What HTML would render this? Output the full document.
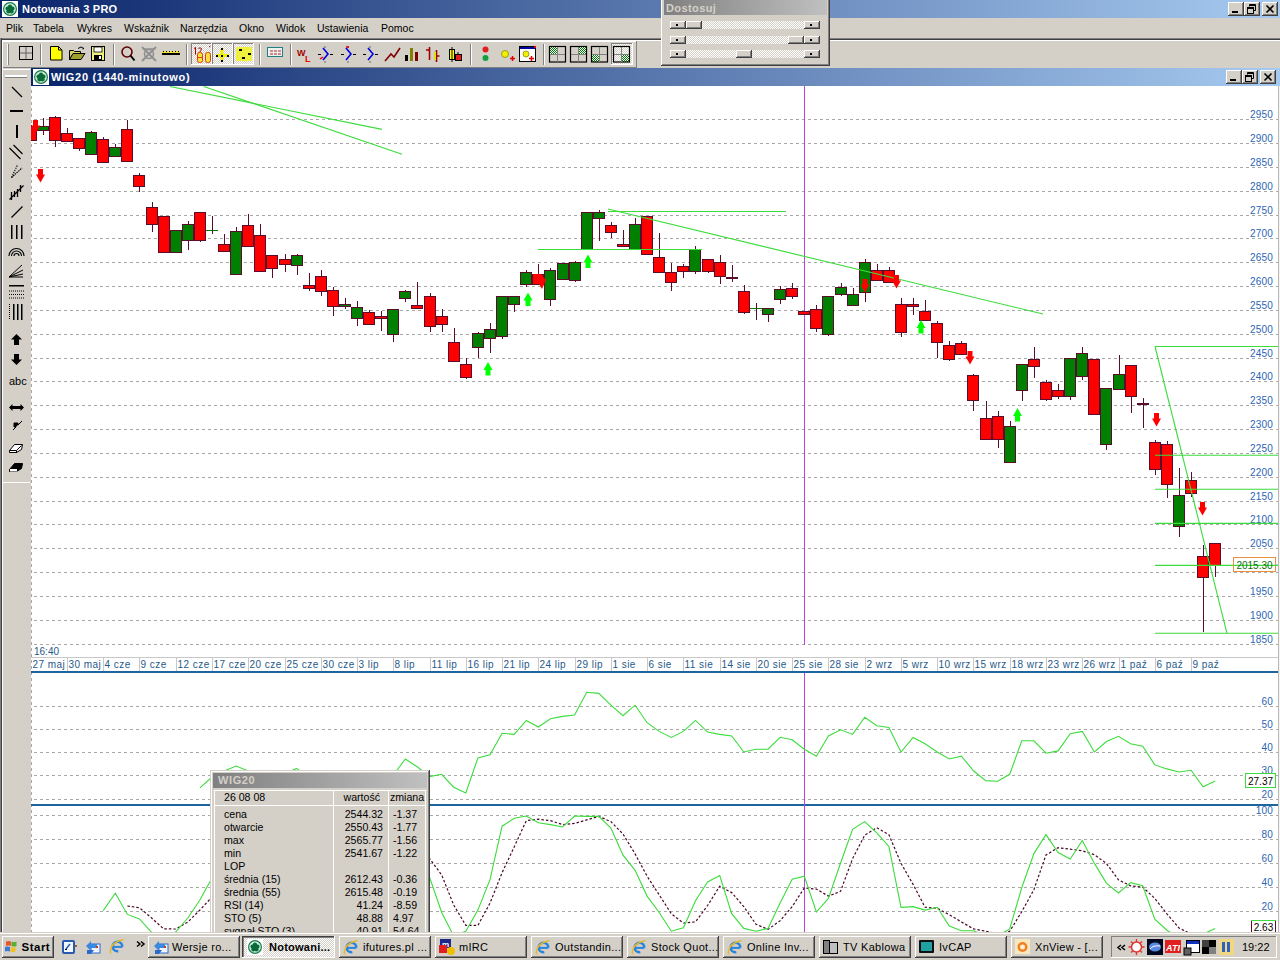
<!DOCTYPE html>
<html><head><meta charset="utf-8"><title>Notowania 3 PRO</title>
<style>html,body{margin:0;padding:0;width:1280px;height:960px;overflow:hidden;background:#d4d0c8}</style>
</head><body>
<svg width="1280" height="960" viewBox="0 0 1280 960" style="position:absolute;left:0;top:0" font-family='"Liberation Sans", sans-serif'>
<defs>
<linearGradient id="tg" x1="0" x2="1" y1="0" y2="0"><stop offset="0" stop-color="#0a246a"/><stop offset="1" stop-color="#a6caf0"/></linearGradient>
<linearGradient id="ig" x1="0" x2="1" y1="0" y2="0"><stop offset="0" stop-color="#808080"/><stop offset="1" stop-color="#c0c0c0"/></linearGradient>
<pattern id="dith" width="2" height="2" patternUnits="userSpaceOnUse"><rect width="2" height="2" fill="#d4d0c8"/><rect width="1" height="1" fill="#ffffff"/><rect x="1" y="1" width="1" height="1" fill="#ffffff"/></pattern>
<pattern id="gdith" width="2" height="2" patternUnits="userSpaceOnUse"><rect width="2" height="2" fill="#ffffff"/><rect width="1" height="1" fill="#008000"/><rect x="1" y="1" width="1" height="1" fill="#008000"/></pattern>
<pattern id="gdith2" width="2" height="2" patternUnits="userSpaceOnUse"><rect width="2" height="2" fill="#c0c0c0"/><rect width="1" height="1" fill="#008000"/><rect x="1" y="1" width="1" height="1" fill="#008000"/></pattern>
<clipPath id="chartclip"><rect x="31" y="86" width="1247" height="560"/></clipPath>
<clipPath id="rsiclip"><rect x="31" y="674" width="1247" height="130"/></clipPath>
<clipPath id="stoclip"><rect x="31" y="806" width="1247" height="126"/></clipPath>
</defs>
<rect x="0" y="0" width="1280" height="960" fill="#d4d0c8" />
<rect x="0" y="0" width="1280" height="18" fill="url(#tg)" />
<rect x="2" y="1" width="16" height="16" fill="#ffffff" />
<circle cx="10" cy="9" r="7" fill="#1a7a4a"/>
<circle cx="10" cy="9" r="5.8" fill="#c8f0d8"/>
<circle cx="10" cy="9.3" r="3.4" fill="#0a6a3a"/>
<circle cx="10.00" cy="6.70" r="2.1" fill="#0a6a3a"/>
<circle cx="12.47" cy="8.50" r="2.1" fill="#0a6a3a"/>
<circle cx="11.53" cy="11.40" r="2.1" fill="#0a6a3a"/>
<circle cx="8.47" cy="11.40" r="2.1" fill="#0a6a3a"/>
<circle cx="7.53" cy="8.50" r="2.1" fill="#0a6a3a"/>
<text x="22" y="13" font-size="11" fill="#ffffff" font-weight="bold" text-anchor="start" letter-spacing="0.25" >Notowania 3 PRO</text>
<rect x="1228" y="2" width="16" height="14" fill="#d4d0c8" />
<rect x="1228" y="2" width="16" height="1" fill="#ffffff"/>
<rect x="1228" y="2" width="1" height="14" fill="#ffffff"/>
<rect x="1228" y="15" width="16" height="1" fill="#404040"/>
<rect x="1243" y="2" width="1" height="14" fill="#404040"/>
<rect x="1229" y="14" width="14" height="1" fill="#808080"/>
<rect x="1242" y="3" width="1" height="12" fill="#808080"/>
<rect x="1232" y="11" width="6" height="2" fill="#000" />
<rect x="1244" y="2" width="16" height="14" fill="#d4d0c8" />
<rect x="1244" y="2" width="16" height="1" fill="#ffffff"/>
<rect x="1244" y="2" width="1" height="14" fill="#ffffff"/>
<rect x="1244" y="15" width="16" height="1" fill="#404040"/>
<rect x="1259" y="2" width="1" height="14" fill="#404040"/>
<rect x="1245" y="14" width="14" height="1" fill="#808080"/>
<rect x="1258" y="3" width="1" height="12" fill="#808080"/>
<path d="M1249.5 4.5h6v6h-2 M1249.5 4.5v2" stroke="#000" fill="none" stroke-width="1"/>
<rect x="1249" y="5" width="7" height="1" fill="#000" />
<rect x="1247.5" y="7.5" width="6" height="6" fill="none" stroke="#000"/>
<rect x="1247" y="8" width="7" height="1" fill="#000" />
<rect x="1262" y="2" width="16" height="14" fill="#d4d0c8" />
<rect x="1262" y="2" width="16" height="1" fill="#ffffff"/>
<rect x="1262" y="2" width="1" height="14" fill="#ffffff"/>
<rect x="1262" y="15" width="16" height="1" fill="#404040"/>
<rect x="1277" y="2" width="1" height="14" fill="#404040"/>
<rect x="1263" y="14" width="14" height="1" fill="#808080"/>
<rect x="1276" y="3" width="1" height="12" fill="#808080"/>
<path d="M1266.5 5.5L1273.5 12.5M1273.5 5.5L1266.5 12.5" stroke="#000" stroke-width="1.6"/>
<rect x="0" y="18" width="1280" height="20" fill="#d4d0c8" />
<text x="6" y="32" font-size="10.5" fill="#000" font-weight="normal" text-anchor="start" >Plik</text>
<text x="33" y="32" font-size="10.5" fill="#000" font-weight="normal" text-anchor="start" >Tabela</text>
<text x="77" y="32" font-size="10.5" fill="#000" font-weight="normal" text-anchor="start" >Wykres</text>
<text x="124" y="32" font-size="10.5" fill="#000" font-weight="normal" text-anchor="start" >Wskaźnik</text>
<text x="180" y="32" font-size="10.5" fill="#000" font-weight="normal" text-anchor="start" >Narzędzia</text>
<text x="239" y="32" font-size="10.5" fill="#000" font-weight="normal" text-anchor="start" >Okno</text>
<text x="276" y="32" font-size="10.5" fill="#000" font-weight="normal" text-anchor="start" >Widok</text>
<text x="317" y="32" font-size="10.5" fill="#000" font-weight="normal" text-anchor="start" >Ustawienia</text>
<text x="381" y="32" font-size="10.5" fill="#000" font-weight="normal" text-anchor="start" >Pomoc</text>
<rect x="0" y="38" width="1280" height="1" fill="#808080"/>
<rect x="0" y="39" width="1280" height="1" fill="#404040"/>
<rect x="0" y="40" width="1280" height="1" fill="#ffffff"/>
<rect x="0" y="41" width="1280" height="27" fill="#d4d0c8" />
<rect x="2" y="41" width="635" height="1" fill="#ffffff"/>
<rect x="636" y="41" width="1" height="27" fill="#808080"/>
<rect x="0" y="67" width="637" height="1" fill="#808080"/>
<rect x="7" y="44" width="1" height="21" fill="#ffffff"/>
<rect x="8" y="44" width="1" height="21" fill="#808080"/>
<rect x="40" y="44" width="1" height="21" fill="#808080"/>
<rect x="41" y="44" width="1" height="21" fill="#ffffff"/>
<rect x="113" y="44" width="1" height="21" fill="#808080"/>
<rect x="114" y="44" width="1" height="21" fill="#ffffff"/>
<rect x="186" y="44" width="1" height="21" fill="#808080"/>
<rect x="187" y="44" width="1" height="21" fill="#ffffff"/>
<rect x="259" y="44" width="1" height="21" fill="#808080"/>
<rect x="260" y="44" width="1" height="21" fill="#ffffff"/>
<rect x="290" y="44" width="1" height="21" fill="#808080"/>
<rect x="291" y="44" width="1" height="21" fill="#ffffff"/>
<rect x="470" y="44" width="1" height="21" fill="#808080"/>
<rect x="471" y="44" width="1" height="21" fill="#ffffff"/>
<rect x="543" y="44" width="1" height="21" fill="#808080"/>
<rect x="544" y="44" width="1" height="21" fill="#ffffff"/>
<rect x="19.5" y="46.5" width="13" height="13" fill="none" stroke="#000"/>
<path d="M26 47v12M20 53h12" stroke="#606060"/>
<path d="M50.5 46.5h8l3.5 3.5v10h-11.5z" fill="#ffff00" stroke="#000"/>
<path d="M58.5 46.5v3.5h3.5" fill="none" stroke="#000"/>
<path d="M69.5 50.5h4l1 1h6v3h-8l-3 5.5z" fill="#d8d060" stroke="#000"/>
<path d="M69.5 59.5l3.5-6h12l-4 6z" fill="#a0a030" stroke="#000"/>
<path d="M78 48.5q3-3 6 0l-1.5 0.5" fill="none" stroke="#000"/>
<rect x="91.5" y="46.5" width="13" height="14" fill="#f0f080" stroke="#000"/>
<rect x="94" y="47" width="8" height="5" fill="#ffffff" stroke="#000" stroke-width="0.8"/>
<rect x="94" y="55" width="8" height="5" fill="#000"/><rect x="99" y="56" width="2" height="3" fill="#ffffff"/>
<circle cx="127" cy="52" r="5" fill="none" stroke="#600000" stroke-width="1.6"/>
<path d="M130.5 55.5l4 5" stroke="#000" stroke-width="2"/>
<path d="M142 47l14 14M156 47l-14 14" stroke="#909090" stroke-width="2"/>
<circle cx="149" cy="54" r="4.5" fill="none" stroke="#909090" stroke-width="1.6"/>
<path d="M143 49h12" stroke="#909090" stroke-width="1.5"/>
<rect x="162" y="53" width="18" height="2" fill="#000"/>
<rect x="162" y="51" width="18" height="2" fill="#f0e040"/>
<rect x="163" y="51" width="1" height="1" fill="#000"/>
<rect x="166" y="51" width="1" height="1" fill="#000"/>
<rect x="169" y="51" width="1" height="1" fill="#000"/>
<rect x="172" y="51" width="1" height="1" fill="#000"/>
<rect x="175" y="51" width="1" height="1" fill="#000"/>
<rect x="178" y="51" width="1" height="1" fill="#000"/>
<rect x="191" y="43" width="21" height="22" fill="url(#dith)" />
<rect x="191" y="43" width="21" height="1" fill="#808080"/>
<rect x="191" y="43" width="1" height="22" fill="#808080"/>
<rect x="191" y="64" width="21" height="1" fill="#ffffff"/>
<rect x="211" y="43" width="1" height="22" fill="#ffffff"/>
<rect x="212" y="43" width="21" height="22" fill="url(#dith)" />
<rect x="212" y="43" width="21" height="1" fill="#808080"/>
<rect x="212" y="43" width="1" height="22" fill="#808080"/>
<rect x="212" y="64" width="21" height="1" fill="#ffffff"/>
<rect x="232" y="43" width="1" height="22" fill="#ffffff"/>
<rect x="233" y="43" width="21" height="22" fill="url(#dith)" />
<rect x="233" y="43" width="21" height="1" fill="#808080"/>
<rect x="233" y="43" width="1" height="22" fill="#808080"/>
<rect x="233" y="64" width="21" height="1" fill="#ffffff"/>
<rect x="253" y="43" width="1" height="22" fill="#ffffff"/>
<path d="M195.5 47.5v7M194 48.5l1.5-1" stroke="#a00000" fill="none"/>
<path d="M198.5 48.5q1.5-1.5 3 0q0 2-3 5h3" stroke="#a00000" fill="none"/>
<path d="M209 47l1.5-1" stroke="#a00000" fill="none"/>
<rect x="197.5" y="52.5" width="5" height="10" rx="2" fill="#f8e040" stroke="#e04000"/>
<path d="M198 57.5h4" stroke="#e04000"/>
<rect x="205.5" y="52.5" width="5" height="10" rx="2" fill="#f8e040" stroke="#e04000"/>
<path d="M222 48.5v12M216.5 55.5h12" stroke="#f0f000" stroke-width="3"/>
<rect x="221" y="48" width="2" height="2" fill="#000"/><rect x="221" y="60" width="2" height="2" fill="#000"/><rect x="216" y="55" width="2" height="2" fill="#000"/><rect x="227" y="55" width="2" height="2" fill="#000"/><rect x="221" y="55" width="2" height="2" fill="#000"/>
<rect x="236" y="47" width="16" height="14" fill="#f0f040"/>
<rect x="239" y="49" width="3" height="2" fill="#000"/><rect x="248" y="53" width="3" height="2" fill="#000"/><rect x="242" y="57" width="3" height="2" fill="#000"/>
<rect x="267.5" y="47.5" width="15" height="9" fill="#e8f0f0" stroke="#208080"/>
<path d="M270 51h3M274 51h3M278 51h3M270 54h3M274 54h3M278 54h3" stroke="#c02020"/>
<text x="297" y="56" font-size="9" fill="#a00000" font-weight="bold" text-anchor="start" >W</text>
<text x="305" y="62" font-size="9" fill="#e00000" font-weight="bold" text-anchor="start" >L</text>
<path d="M323 48l5 6l-5 6" fill="none" stroke="#0000e0" stroke-width="1.6"/>
<path d="M318 54.5h3M330 54.5h3M325 46.5v1M325 61.5v1" stroke="#000" stroke-width="1"/>
<path d="M320 59l3 -2" stroke="#e00000" stroke-width="1.5"/>
<path d="M346 48l5 6l-5 6" fill="none" stroke="#0000e0" stroke-width="1.6"/>
<path d="M341 54.5h3M353 54.5h3M348 46.5v1M348 61.5v1" stroke="#000" stroke-width="1"/>
<path d="M346 47l3 0" stroke="#e00000" stroke-width="1.5"/>
<path d="M368 48l5 6l-5 6" fill="none" stroke="#0000e0" stroke-width="1.6"/>
<path d="M363 54.5h3M375 54.5h3M370 46.5v1M370 61.5v1" stroke="#000" stroke-width="1"/>
<path d="M385 61l6-7l3 3l6-9" fill="none" stroke="#800000" stroke-width="1.6"/>
<rect x="405" y="55" width="3" height="6" fill="#000"/><rect x="410" y="48" width="3" height="13" fill="#808000"/><rect x="415" y="52" width="3" height="9" fill="#800000"/>
<path d="M429.5 47v13M426 50h3.5M436.5 50v12M436.5 56h3" stroke="#a00000" stroke-width="1.6" fill="none"/>
<rect x="434" y="52" width="2" height="8" fill="#e0e000"/>
<rect x="449.5" y="49.5" width="5" height="10" fill="#ffff00" stroke="#000"/>
<path d="M452 47v15M458 52v9" stroke="#000"/>
<rect x="455.5" y="54.5" width="6" height="6" fill="#e02020" stroke="#000"/>
<circle cx="485.5" cy="49.5" r="3" fill="#e02020"/><circle cx="485.5" cy="58" r="3" fill="#10a040"/>
<circle cx="505" cy="54" r="3.5" fill="#f0f000" stroke="#808000" stroke-width="0.7"/>
<path d="M510 58.5h5M512.5 56v5" stroke="#e00000" stroke-width="1.5"/>
<rect x="519.5" y="46.5" width="16" height="15" fill="#ffffff" stroke="#000"/>
<rect x="520" y="47" width="15" height="2" fill="#0000a0"/><rect x="534" y="46" width="2" height="2" fill="#e00000"/>
<circle cx="526" cy="54" r="3" fill="#f0f000" stroke="#808000" stroke-width="0.7"/>
<path d="M529 58.5h5M531.5 56v5" stroke="#e00000" stroke-width="1.5"/>
<rect x="550" y="47" width="7" height="7" fill="url(#gdith)"/>
<rect x="549.5" y="46.5" width="16" height="15.5" fill="none" stroke="#000" stroke-width="1.2"/>
<path d="M557.5 47v15M550 54.5h15" stroke="#808080"/>
<rect x="579" y="47" width="7" height="7" fill="url(#gdith)"/>
<rect x="570.5" y="46.5" width="16" height="15.5" fill="none" stroke="#000" stroke-width="1.2"/>
<path d="M578.5 47v15M571 54.5h15" stroke="#808080"/>
<rect x="592" y="55" width="7" height="7" fill="url(#gdith)"/>
<rect x="591.5" y="46.5" width="16" height="15.5" fill="none" stroke="#000" stroke-width="1.2"/>
<path d="M599.5 47v15M592 54.5h15" stroke="#808080"/>
<rect x="611" y="43" width="22" height="22" fill="url(#dith)" />
<rect x="611" y="43" width="22" height="1" fill="#808080"/>
<rect x="611" y="43" width="1" height="22" fill="#808080"/>
<rect x="611" y="64" width="22" height="1" fill="#ffffff"/>
<rect x="632" y="43" width="1" height="22" fill="#ffffff"/>
<rect x="622" y="55" width="7" height="7" fill="url(#gdith)"/>
<rect x="613.5" y="46.5" width="16" height="15.5" fill="none" stroke="#000" stroke-width="1.2"/>
<path d="M621.5 47v15M614 54.5h15" stroke="#808080"/>
<rect x="0" y="68" width="31" height="1212" fill="#d4d0c8" />
<rect x="0" y="38" width="1" height="894" fill="#808080"/>
<rect x="1" y="38" width="1" height="894" fill="#404040"/>
<rect x="2" y="40" width="1" height="892" fill="#ffffff"/>
<rect x="2" y="69" width="28" height="1" fill="#ffffff"/>
<rect x="3" y="482" width="27" height="1" fill="#ffffff"/>
<rect x="5" y="75" width="22" height="1" fill="#ffffff"/>
<rect x="5" y="76" width="22" height="1" fill="#ffffff"/>
<rect x="5" y="77" width="22" height="1" fill="#808080"/>
<path d="M12 87l10 10" stroke="#000" fill="none" stroke-width="1.2"/>
<rect x="10" y="110" width="13" height="2" fill="#000"/>
<rect x="16" y="125" width="2" height="13" fill="#000"/>
<path d="M9.5 148l11 11M13.5 145l9 9" stroke="#000" fill="none" stroke-width="1.2"/>
<path d="M11.5 177.5L17.5 165" stroke="#000" stroke-width="1.2" stroke-dasharray="1.2 1.2" fill="none"/>
<path d="M11.5 177.5L22 168" stroke="#000" stroke-width="1.2" stroke-dasharray="1.5 0.8" fill="none"/>
<path d="M9.5 199.5L23.5 185.5M11.5 192v8M14.5 191v6M17.5 189v8M20.5 185v7" stroke="#000" stroke-width="1.3" fill="none"/>
<path d="M11.5 217.5l11-11" stroke="#000" fill="none" stroke-width="1.2"/>
<rect x="11" y="225" width="1.5" height="14" fill="#000"/><rect x="16" y="225" width="1.5" height="14" fill="#000"/><rect x="21" y="225" width="1.5" height="14" fill="#000"/>
<path d="M9 256a7.5 7.5 0 0 1 15 0M11.5 256a5 5 0 0 1 10 0M14 256a2.5 2.5 0 0 1 5 0" stroke="#000" fill="none" stroke-width="1.1"/>
<path d="M9 277l13-12M9 277l14-7M9 277l14-3" stroke="#000" fill="none" stroke-width="1"/><path d="M9 277h14" stroke="#000" fill="none"/>
<rect x="9" y="285" width="15" height="1.5" fill="#000"/>
<path d="M9 291h15M9 294.5h15M9 298h15" stroke="#000" fill="none" stroke-dasharray="1 1"/>
<path d="M9.5 304v16" stroke="#000" fill="none" stroke-dasharray="1 1"/>
<rect x="13" y="304" width="1.5" height="16" fill="#000"/><rect x="17" y="304" width="1.5" height="16" fill="#000"/><rect x="21" y="304" width="1.5" height="16" fill="#000"/>
<path d="M16.5 334l5.5 5.5h-3v5.5h-5v-5.5h-3z" fill="#000"/>
<path d="M16.5 365l5.5-5.5h-3v-5.5h-5v5.5h-3z" fill="#000"/>
<text x="9" y="385" font-size="11" fill="#000" font-weight="normal" text-anchor="start" >abc</text>
<path d="M9 407.5l3.5-3.5v2h8v-2l3.5 3.5l-3.5 3.5v-2h-8v2z" fill="#000"/>
<path d="M13 430l3-3h-2v-4h4v2l3-3" fill="#000" stroke="#000"/><rect x="21" y="421" width="1" height="1" fill="#000"/>
<path d="M9.5 450.5l5-6h8l-1 5l-5 3h-7z" fill="#ffffff" stroke="#000"/><path d="M9.5 450.5h7l5-5" fill="none" stroke="#000"/><path d="M16.5 450.5v2.5" stroke="#000"/>
<path d="M9.5 469.5l5-6h8l-1 5l-5 3h-7z" fill="#000" stroke="#000"/><rect x="10" y="469" width="7" height="2.5" fill="#ffffff"/>
<rect x="31" y="68" width="1249" height="18" fill="url(#tg)" />
<rect x="33" y="69" width="16" height="16" fill="#ffffff" />
<circle cx="41" cy="77" r="7" fill="#1a7a4a"/>
<circle cx="41" cy="77" r="5.8" fill="#c8f0d8"/>
<circle cx="41" cy="77.3" r="3.4" fill="#0a6a3a"/>
<circle cx="41.00" cy="74.70" r="2.1" fill="#0a6a3a"/>
<circle cx="43.47" cy="76.50" r="2.1" fill="#0a6a3a"/>
<circle cx="42.53" cy="79.40" r="2.1" fill="#0a6a3a"/>
<circle cx="39.47" cy="79.40" r="2.1" fill="#0a6a3a"/>
<circle cx="38.53" cy="76.50" r="2.1" fill="#0a6a3a"/>
<text x="51" y="81" font-size="11" fill="#ffffff" font-weight="bold" text-anchor="start" letter-spacing="0.7" >WIG20 (1440-minutowo)</text>
<rect x="1226" y="70" width="16" height="14" fill="#d4d0c8" />
<rect x="1226" y="70" width="16" height="1" fill="#ffffff"/>
<rect x="1226" y="70" width="1" height="14" fill="#ffffff"/>
<rect x="1226" y="83" width="16" height="1" fill="#404040"/>
<rect x="1241" y="70" width="1" height="14" fill="#404040"/>
<rect x="1227" y="82" width="14" height="1" fill="#808080"/>
<rect x="1240" y="71" width="1" height="12" fill="#808080"/>
<rect x="1230" y="79" width="6" height="2" fill="#000" />
<rect x="1242" y="70" width="16" height="14" fill="#d4d0c8" />
<rect x="1242" y="70" width="16" height="1" fill="#ffffff"/>
<rect x="1242" y="70" width="1" height="14" fill="#ffffff"/>
<rect x="1242" y="83" width="16" height="1" fill="#404040"/>
<rect x="1257" y="70" width="1" height="14" fill="#404040"/>
<rect x="1243" y="82" width="14" height="1" fill="#808080"/>
<rect x="1256" y="71" width="1" height="12" fill="#808080"/>
<path d="M1247.5 72.5h6v6h-2 M1247.5 72.5v2" stroke="#000" fill="none" stroke-width="1"/>
<rect x="1247" y="73" width="7" height="1" fill="#000" />
<rect x="1245.5" y="75.5" width="6" height="6" fill="none" stroke="#000"/>
<rect x="1245" y="76" width="7" height="1" fill="#000" />
<rect x="1260" y="70" width="16" height="14" fill="#d4d0c8" />
<rect x="1260" y="70" width="16" height="1" fill="#ffffff"/>
<rect x="1260" y="70" width="1" height="14" fill="#ffffff"/>
<rect x="1260" y="83" width="16" height="1" fill="#404040"/>
<rect x="1275" y="70" width="1" height="14" fill="#404040"/>
<rect x="1261" y="82" width="14" height="1" fill="#808080"/>
<rect x="1274" y="71" width="1" height="12" fill="#808080"/>
<path d="M1264.5 73.5L1271.5 80.5M1271.5 73.5L1264.5 80.5" stroke="#000" stroke-width="1.6"/>
<rect x="31" y="86" width="1247" height="846" fill="#ffffff" />
<line x1="31.5" y1="90" x2="31.5" y2="932" stroke="#a8a8a8" stroke-dasharray="3 3"/>
<rect x="1278" y="86" width="1" height="846" fill="#b8b8b8"/>
<rect x="1279" y="86" width="1" height="846" fill="#f4f4f4"/>
<line x1="34" y1="119.5" x2="1278" y2="119.5" stroke="#a8a8a8" stroke-width="1" stroke-dasharray="3 3"/>
<text x="1273" y="118" font-size="10" fill="#2a64b4" font-weight="normal" text-anchor="end" letter-spacing="0.2" >2950</text>
<line x1="34" y1="143.5" x2="1278" y2="143.5" stroke="#a8a8a8" stroke-width="1" stroke-dasharray="3 3"/>
<text x="1273" y="142" font-size="10" fill="#2a64b4" font-weight="normal" text-anchor="end" letter-spacing="0.2" >2900</text>
<line x1="34" y1="167.5" x2="1278" y2="167.5" stroke="#a8a8a8" stroke-width="1" stroke-dasharray="3 3"/>
<text x="1273" y="166" font-size="10" fill="#2a64b4" font-weight="normal" text-anchor="end" letter-spacing="0.2" >2850</text>
<line x1="34" y1="191.5" x2="1278" y2="191.5" stroke="#a8a8a8" stroke-width="1" stroke-dasharray="3 3"/>
<text x="1273" y="190" font-size="10" fill="#2a64b4" font-weight="normal" text-anchor="end" letter-spacing="0.2" >2800</text>
<line x1="34" y1="215.5" x2="1278" y2="215.5" stroke="#a8a8a8" stroke-width="1" stroke-dasharray="3 3"/>
<text x="1273" y="214" font-size="10" fill="#2a64b4" font-weight="normal" text-anchor="end" letter-spacing="0.2" >2750</text>
<line x1="34" y1="238.5" x2="1278" y2="238.5" stroke="#a8a8a8" stroke-width="1" stroke-dasharray="3 3"/>
<text x="1273" y="237" font-size="10" fill="#2a64b4" font-weight="normal" text-anchor="end" letter-spacing="0.2" >2700</text>
<line x1="34" y1="262.5" x2="1278" y2="262.5" stroke="#a8a8a8" stroke-width="1" stroke-dasharray="3 3"/>
<text x="1273" y="261" font-size="10" fill="#2a64b4" font-weight="normal" text-anchor="end" letter-spacing="0.2" >2650</text>
<line x1="34" y1="286.5" x2="1278" y2="286.5" stroke="#a8a8a8" stroke-width="1" stroke-dasharray="3 3"/>
<text x="1273" y="285" font-size="10" fill="#2a64b4" font-weight="normal" text-anchor="end" letter-spacing="0.2" >2600</text>
<line x1="34" y1="310.5" x2="1278" y2="310.5" stroke="#a8a8a8" stroke-width="1" stroke-dasharray="3 3"/>
<text x="1273" y="309" font-size="10" fill="#2a64b4" font-weight="normal" text-anchor="end" letter-spacing="0.2" >2550</text>
<line x1="34" y1="334.5" x2="1278" y2="334.5" stroke="#a8a8a8" stroke-width="1" stroke-dasharray="3 3"/>
<text x="1273" y="333" font-size="10" fill="#2a64b4" font-weight="normal" text-anchor="end" letter-spacing="0.2" >2500</text>
<line x1="34" y1="358.5" x2="1278" y2="358.5" stroke="#a8a8a8" stroke-width="1" stroke-dasharray="3 3"/>
<text x="1273" y="357" font-size="10" fill="#2a64b4" font-weight="normal" text-anchor="end" letter-spacing="0.2" >2450</text>
<line x1="34" y1="381.5" x2="1278" y2="381.5" stroke="#a8a8a8" stroke-width="1" stroke-dasharray="3 3"/>
<text x="1273" y="380" font-size="10" fill="#2a64b4" font-weight="normal" text-anchor="end" letter-spacing="0.2" >2400</text>
<line x1="34" y1="405.5" x2="1278" y2="405.5" stroke="#a8a8a8" stroke-width="1" stroke-dasharray="3 3"/>
<text x="1273" y="404" font-size="10" fill="#2a64b4" font-weight="normal" text-anchor="end" letter-spacing="0.2" >2350</text>
<line x1="34" y1="429.5" x2="1278" y2="429.5" stroke="#a8a8a8" stroke-width="1" stroke-dasharray="3 3"/>
<text x="1273" y="428" font-size="10" fill="#2a64b4" font-weight="normal" text-anchor="end" letter-spacing="0.2" >2300</text>
<line x1="34" y1="453.5" x2="1278" y2="453.5" stroke="#a8a8a8" stroke-width="1" stroke-dasharray="3 3"/>
<text x="1273" y="452" font-size="10" fill="#2a64b4" font-weight="normal" text-anchor="end" letter-spacing="0.2" >2250</text>
<line x1="34" y1="477.5" x2="1278" y2="477.5" stroke="#a8a8a8" stroke-width="1" stroke-dasharray="3 3"/>
<text x="1273" y="476" font-size="10" fill="#2a64b4" font-weight="normal" text-anchor="end" letter-spacing="0.2" >2200</text>
<line x1="34" y1="501.5" x2="1278" y2="501.5" stroke="#a8a8a8" stroke-width="1" stroke-dasharray="3 3"/>
<text x="1273" y="500" font-size="10" fill="#2a64b4" font-weight="normal" text-anchor="end" letter-spacing="0.2" >2150</text>
<line x1="34" y1="524.5" x2="1278" y2="524.5" stroke="#a8a8a8" stroke-width="1" stroke-dasharray="3 3"/>
<text x="1273" y="523" font-size="10" fill="#2a64b4" font-weight="normal" text-anchor="end" letter-spacing="0.2" >2100</text>
<line x1="34" y1="548.5" x2="1278" y2="548.5" stroke="#a8a8a8" stroke-width="1" stroke-dasharray="3 3"/>
<text x="1273" y="547" font-size="10" fill="#2a64b4" font-weight="normal" text-anchor="end" letter-spacing="0.2" >2050</text>
<line x1="34" y1="572.5" x2="1278" y2="572.5" stroke="#a8a8a8" stroke-width="1" stroke-dasharray="3 3"/>
<text x="1273" y="571" font-size="10" fill="#2a64b4" font-weight="normal" text-anchor="end" letter-spacing="0.2" >2000</text>
<line x1="34" y1="596.5" x2="1278" y2="596.5" stroke="#a8a8a8" stroke-width="1" stroke-dasharray="3 3"/>
<text x="1273" y="595" font-size="10" fill="#2a64b4" font-weight="normal" text-anchor="end" letter-spacing="0.2" >1950</text>
<line x1="34" y1="620.5" x2="1278" y2="620.5" stroke="#a8a8a8" stroke-width="1" stroke-dasharray="3 3"/>
<text x="1273" y="619" font-size="10" fill="#2a64b4" font-weight="normal" text-anchor="end" letter-spacing="0.2" >1900</text>
<line x1="34" y1="644.5" x2="1278" y2="644.5" stroke="#a8a8a8" stroke-width="1" stroke-dasharray="3 3"/>
<text x="1273" y="643" font-size="10" fill="#2a64b4" font-weight="normal" text-anchor="end" letter-spacing="0.2" >1850</text>
<rect x="31" y="657" width="1247" height="1" fill="#c8c8c8"/>
<text x="34" y="655" font-size="10" fill="#1f5a8a" font-weight="normal" text-anchor="start" >16:40</text>
<text x="32.5" y="668" font-size="10" fill="#1f5a8a" font-weight="normal" text-anchor="start" letter-spacing="0.45" >27 maj</text>
<rect x="67" y="658" width="1" height="13" fill="#c8c8c8"/>
<text x="68.5" y="668" font-size="10" fill="#1f5a8a" font-weight="normal" text-anchor="start" letter-spacing="0.45" >30 maj</text>
<rect x="103" y="658" width="1" height="13" fill="#c8c8c8"/>
<text x="104.5" y="668" font-size="10" fill="#1f5a8a" font-weight="normal" text-anchor="start" letter-spacing="0.45" >4 cze</text>
<rect x="139" y="658" width="1" height="13" fill="#c8c8c8"/>
<text x="140.5" y="668" font-size="10" fill="#1f5a8a" font-weight="normal" text-anchor="start" letter-spacing="0.45" >9 cze</text>
<rect x="176" y="658" width="1" height="13" fill="#c8c8c8"/>
<text x="177.5" y="668" font-size="10" fill="#1f5a8a" font-weight="normal" text-anchor="start" letter-spacing="0.45" >12 cze</text>
<rect x="212" y="658" width="1" height="13" fill="#c8c8c8"/>
<text x="213.5" y="668" font-size="10" fill="#1f5a8a" font-weight="normal" text-anchor="start" letter-spacing="0.45" >17 cze</text>
<rect x="248" y="658" width="1" height="13" fill="#c8c8c8"/>
<text x="249.5" y="668" font-size="10" fill="#1f5a8a" font-weight="normal" text-anchor="start" letter-spacing="0.45" >20 cze</text>
<rect x="285" y="658" width="1" height="13" fill="#c8c8c8"/>
<text x="286.5" y="668" font-size="10" fill="#1f5a8a" font-weight="normal" text-anchor="start" letter-spacing="0.45" >25 cze</text>
<rect x="321" y="658" width="1" height="13" fill="#c8c8c8"/>
<text x="322.5" y="668" font-size="10" fill="#1f5a8a" font-weight="normal" text-anchor="start" letter-spacing="0.45" >30 cze</text>
<rect x="357" y="658" width="1" height="13" fill="#c8c8c8"/>
<text x="358.5" y="668" font-size="10" fill="#1f5a8a" font-weight="normal" text-anchor="start" letter-spacing="0.45" >3 lip</text>
<rect x="393" y="658" width="1" height="13" fill="#c8c8c8"/>
<text x="394.5" y="668" font-size="10" fill="#1f5a8a" font-weight="normal" text-anchor="start" letter-spacing="0.45" >8 lip</text>
<rect x="430" y="658" width="1" height="13" fill="#c8c8c8"/>
<text x="431.5" y="668" font-size="10" fill="#1f5a8a" font-weight="normal" text-anchor="start" letter-spacing="0.45" >11 lip</text>
<rect x="466" y="658" width="1" height="13" fill="#c8c8c8"/>
<text x="467.5" y="668" font-size="10" fill="#1f5a8a" font-weight="normal" text-anchor="start" letter-spacing="0.45" >16 lip</text>
<rect x="502" y="658" width="1" height="13" fill="#c8c8c8"/>
<text x="503.5" y="668" font-size="10" fill="#1f5a8a" font-weight="normal" text-anchor="start" letter-spacing="0.45" >21 lip</text>
<rect x="538" y="658" width="1" height="13" fill="#c8c8c8"/>
<text x="539.5" y="668" font-size="10" fill="#1f5a8a" font-weight="normal" text-anchor="start" letter-spacing="0.45" >24 lip</text>
<rect x="575" y="658" width="1" height="13" fill="#c8c8c8"/>
<text x="576.5" y="668" font-size="10" fill="#1f5a8a" font-weight="normal" text-anchor="start" letter-spacing="0.45" >29 lip</text>
<rect x="611" y="658" width="1" height="13" fill="#c8c8c8"/>
<text x="612.5" y="668" font-size="10" fill="#1f5a8a" font-weight="normal" text-anchor="start" letter-spacing="0.45" >1 sie</text>
<rect x="647" y="658" width="1" height="13" fill="#c8c8c8"/>
<text x="648.5" y="668" font-size="10" fill="#1f5a8a" font-weight="normal" text-anchor="start" letter-spacing="0.45" >6 sie</text>
<rect x="683" y="658" width="1" height="13" fill="#c8c8c8"/>
<text x="684.5" y="668" font-size="10" fill="#1f5a8a" font-weight="normal" text-anchor="start" letter-spacing="0.45" >11 sie</text>
<rect x="720" y="658" width="1" height="13" fill="#c8c8c8"/>
<text x="721.5" y="668" font-size="10" fill="#1f5a8a" font-weight="normal" text-anchor="start" letter-spacing="0.45" >14 sie</text>
<rect x="756" y="658" width="1" height="13" fill="#c8c8c8"/>
<text x="757.5" y="668" font-size="10" fill="#1f5a8a" font-weight="normal" text-anchor="start" letter-spacing="0.45" >20 sie</text>
<rect x="792" y="658" width="1" height="13" fill="#c8c8c8"/>
<text x="793.5" y="668" font-size="10" fill="#1f5a8a" font-weight="normal" text-anchor="start" letter-spacing="0.45" >25 sie</text>
<rect x="828" y="658" width="1" height="13" fill="#c8c8c8"/>
<text x="829.5" y="668" font-size="10" fill="#1f5a8a" font-weight="normal" text-anchor="start" letter-spacing="0.45" >28 sie</text>
<rect x="865" y="658" width="1" height="13" fill="#c8c8c8"/>
<text x="866.5" y="668" font-size="10" fill="#1f5a8a" font-weight="normal" text-anchor="start" letter-spacing="0.45" >2 wrz</text>
<rect x="901" y="658" width="1" height="13" fill="#c8c8c8"/>
<text x="902.5" y="668" font-size="10" fill="#1f5a8a" font-weight="normal" text-anchor="start" letter-spacing="0.45" >5 wrz</text>
<rect x="937" y="658" width="1" height="13" fill="#c8c8c8"/>
<text x="938.5" y="668" font-size="10" fill="#1f5a8a" font-weight="normal" text-anchor="start" letter-spacing="0.45" >10 wrz</text>
<rect x="973" y="658" width="1" height="13" fill="#c8c8c8"/>
<text x="974.5" y="668" font-size="10" fill="#1f5a8a" font-weight="normal" text-anchor="start" letter-spacing="0.45" >15 wrz</text>
<rect x="1010" y="658" width="1" height="13" fill="#c8c8c8"/>
<text x="1011.5" y="668" font-size="10" fill="#1f5a8a" font-weight="normal" text-anchor="start" letter-spacing="0.45" >18 wrz</text>
<rect x="1046" y="658" width="1" height="13" fill="#c8c8c8"/>
<text x="1047.5" y="668" font-size="10" fill="#1f5a8a" font-weight="normal" text-anchor="start" letter-spacing="0.45" >23 wrz</text>
<rect x="1082" y="658" width="1" height="13" fill="#c8c8c8"/>
<text x="1083.5" y="668" font-size="10" fill="#1f5a8a" font-weight="normal" text-anchor="start" letter-spacing="0.45" >26 wrz</text>
<rect x="1119" y="658" width="1" height="13" fill="#c8c8c8"/>
<text x="1120.5" y="668" font-size="10" fill="#1f5a8a" font-weight="normal" text-anchor="start" letter-spacing="0.45" >1 paź</text>
<rect x="1155" y="658" width="1" height="13" fill="#c8c8c8"/>
<text x="1156.5" y="668" font-size="10" fill="#1f5a8a" font-weight="normal" text-anchor="start" letter-spacing="0.45" >6 paź</text>
<rect x="1191" y="658" width="1" height="13" fill="#c8c8c8"/>
<text x="1192.5" y="668" font-size="10" fill="#1f5a8a" font-weight="normal" text-anchor="start" letter-spacing="0.45" >9 paź</text>
<rect x="31" y="671" width="1247" height="2" fill="#1a64a0" />
<line x1="34" y1="706.5" x2="1278" y2="706.5" stroke="#a8a8a8" stroke-width="1" stroke-dasharray="3 3"/>
<text x="1273" y="705" font-size="10" fill="#2a64b4" font-weight="normal" text-anchor="end" letter-spacing="0.2" >60</text>
<line x1="34" y1="729.5" x2="1278" y2="729.5" stroke="#a8a8a8" stroke-width="1" stroke-dasharray="3 3"/>
<text x="1273" y="728" font-size="10" fill="#2a64b4" font-weight="normal" text-anchor="end" letter-spacing="0.2" >50</text>
<line x1="34" y1="752.5" x2="1278" y2="752.5" stroke="#a8a8a8" stroke-width="1" stroke-dasharray="3 3"/>
<text x="1273" y="751" font-size="10" fill="#2a64b4" font-weight="normal" text-anchor="end" letter-spacing="0.2" >40</text>
<line x1="34" y1="775.5" x2="1278" y2="775.5" stroke="#a8a8a8" stroke-width="1" stroke-dasharray="3 3"/>
<text x="1273" y="774" font-size="10" fill="#2a64b4" font-weight="normal" text-anchor="end" letter-spacing="0.2" >30</text>
<line x1="34" y1="799.5" x2="1278" y2="799.5" stroke="#a8a8a8" stroke-width="1" stroke-dasharray="3 3"/>
<text x="1273" y="798" font-size="10" fill="#2a64b4" font-weight="normal" text-anchor="end" letter-spacing="0.2" >20</text>
<rect x="31" y="804" width="1247" height="2" fill="#1a64a0" />
<line x1="34" y1="815.5" x2="1278" y2="815.5" stroke="#a8a8a8" stroke-width="1" stroke-dasharray="3 3"/>
<text x="1273" y="814" font-size="10" fill="#2a64b4" font-weight="normal" text-anchor="end" letter-spacing="0.2" >100</text>
<line x1="34" y1="839.5" x2="1278" y2="839.5" stroke="#a8a8a8" stroke-width="1" stroke-dasharray="3 3"/>
<text x="1273" y="838" font-size="10" fill="#2a64b4" font-weight="normal" text-anchor="end" letter-spacing="0.2" >80</text>
<line x1="34" y1="863.5" x2="1278" y2="863.5" stroke="#a8a8a8" stroke-width="1" stroke-dasharray="3 3"/>
<text x="1273" y="862" font-size="10" fill="#2a64b4" font-weight="normal" text-anchor="end" letter-spacing="0.2" >60</text>
<line x1="34" y1="887.5" x2="1278" y2="887.5" stroke="#a8a8a8" stroke-width="1" stroke-dasharray="3 3"/>
<text x="1273" y="886" font-size="10" fill="#2a64b4" font-weight="normal" text-anchor="end" letter-spacing="0.2" >40</text>
<line x1="34" y1="911.5" x2="1278" y2="911.5" stroke="#a8a8a8" stroke-width="1" stroke-dasharray="3 3"/>
<text x="1273" y="910" font-size="10" fill="#2a64b4" font-weight="normal" text-anchor="end" letter-spacing="0.2" >20</text>
<!--CHART-->
<rect x="804" y="86" width="1" height="559" fill="#c040e0"/>
<rect x="804" y="673" width="1" height="259" fill="#c040e0"/>
<g clip-path="url(#chartclip)">
<rect x="31" y="125" width="1" height="16" fill="#5a0c2c"/>
<rect x="25.5" y="126.5" width="11" height="14" fill="#ff0000" stroke="#5a0c2c" stroke-width="1"/>
<rect x="43" y="118" width="1" height="17" fill="#5a0c2c"/>
<rect x="37.5" y="126.5" width="11" height="4" fill="#008000" stroke="#5a0c2c" stroke-width="1"/>
<rect x="55" y="116" width="1" height="31" fill="#5a0c2c"/>
<rect x="49.5" y="117.5" width="11" height="23" fill="#ff0000" stroke="#5a0c2c" stroke-width="1"/>
<rect x="67" y="128" width="1" height="13" fill="#5a0c2c"/>
<rect x="61.5" y="133.5" width="11" height="8" fill="#ff0000" stroke="#5a0c2c" stroke-width="1"/>
<rect x="79" y="138" width="1" height="13" fill="#5a0c2c"/>
<rect x="73.5" y="138.5" width="11" height="10" fill="#ff0000" stroke="#5a0c2c" stroke-width="1"/>
<rect x="91" y="131" width="1" height="23" fill="#5a0c2c"/>
<rect x="85.5" y="132.5" width="11" height="22" fill="#008000" stroke="#5a0c2c" stroke-width="1"/>
<rect x="103" y="137" width="1" height="25" fill="#5a0c2c"/>
<rect x="97.5" y="139.5" width="11" height="23" fill="#ff0000" stroke="#5a0c2c" stroke-width="1"/>
<rect x="115" y="144" width="1" height="12" fill="#5a0c2c"/>
<rect x="109.5" y="147.5" width="11" height="9" fill="#008000" stroke="#5a0c2c" stroke-width="1"/>
<rect x="127" y="120" width="1" height="41" fill="#5a0c2c"/>
<rect x="121.5" y="129.5" width="11" height="32" fill="#ff0000" stroke="#5a0c2c" stroke-width="1"/>
<rect x="139" y="173" width="1" height="19" fill="#5a0c2c"/>
<rect x="133.5" y="175.5" width="11" height="11" fill="#ff0000" stroke="#5a0c2c" stroke-width="1"/>
<rect x="152" y="202" width="1" height="30" fill="#5a0c2c"/>
<rect x="146.5" y="207.5" width="11" height="17" fill="#ff0000" stroke="#5a0c2c" stroke-width="1"/>
<rect x="164" y="216" width="1" height="36" fill="#5a0c2c"/>
<rect x="158.5" y="216.5" width="11" height="36" fill="#ff0000" stroke="#5a0c2c" stroke-width="1"/>
<rect x="176" y="230" width="1" height="22" fill="#5a0c2c"/>
<rect x="170.5" y="230.5" width="11" height="22" fill="#008000" stroke="#5a0c2c" stroke-width="1"/>
<rect x="188" y="221" width="1" height="29" fill="#5a0c2c"/>
<rect x="182.5" y="224.5" width="11" height="16" fill="#008000" stroke="#5a0c2c" stroke-width="1"/>
<rect x="200" y="212" width="1" height="30" fill="#5a0c2c"/>
<rect x="194.5" y="212.5" width="11" height="28" fill="#ff0000" stroke="#5a0c2c" stroke-width="1"/>
<rect x="212" y="216" width="1" height="18" fill="#5a0c2c"/>
<rect x="206" y="230" width="12" height="1" fill="#008000"/>
<rect x="212" y="216" width="1" height="18" fill="#5a0c2c"/>
<rect x="224" y="234" width="1" height="18" fill="#5a0c2c"/>
<rect x="218.5" y="244.5" width="11" height="7" fill="#ff0000" stroke="#5a0c2c" stroke-width="1"/>
<rect x="236" y="227" width="1" height="47" fill="#5a0c2c"/>
<rect x="230.5" y="231.5" width="11" height="43" fill="#008000" stroke="#5a0c2c" stroke-width="1"/>
<rect x="248" y="214" width="1" height="32" fill="#5a0c2c"/>
<rect x="242.5" y="225.5" width="11" height="21" fill="#ff0000" stroke="#5a0c2c" stroke-width="1"/>
<rect x="260" y="224" width="1" height="47" fill="#5a0c2c"/>
<rect x="254.5" y="235.5" width="11" height="36" fill="#ff0000" stroke="#5a0c2c" stroke-width="1"/>
<rect x="272" y="255" width="1" height="23" fill="#5a0c2c"/>
<rect x="266.5" y="255.5" width="11" height="13" fill="#ff0000" stroke="#5a0c2c" stroke-width="1"/>
<rect x="285" y="254" width="1" height="18" fill="#5a0c2c"/>
<rect x="279.5" y="259.5" width="11" height="5" fill="#ff0000" stroke="#5a0c2c" stroke-width="1"/>
<rect x="297" y="254" width="1" height="21" fill="#5a0c2c"/>
<rect x="291.5" y="255.5" width="11" height="10" fill="#008000" stroke="#5a0c2c" stroke-width="1"/>
<rect x="309" y="273" width="1" height="18" fill="#5a0c2c"/>
<rect x="303.5" y="285.5" width="11" height="3" fill="#ff0000" stroke="#5a0c2c" stroke-width="1"/>
<rect x="321" y="270" width="1" height="26" fill="#5a0c2c"/>
<rect x="315.5" y="276.5" width="11" height="15" fill="#ff0000" stroke="#5a0c2c" stroke-width="1"/>
<rect x="333" y="287" width="1" height="29" fill="#5a0c2c"/>
<rect x="327.5" y="290.5" width="11" height="16" fill="#ff0000" stroke="#5a0c2c" stroke-width="1"/>
<rect x="345" y="298" width="1" height="11" fill="#5a0c2c"/>
<rect x="339.5" y="304.5" width="11" height="2" fill="#008000" stroke="#5a0c2c" stroke-width="1"/>
<rect x="357" y="301" width="1" height="25" fill="#5a0c2c"/>
<rect x="351.5" y="307.5" width="11" height="11" fill="#008000" stroke="#5a0c2c" stroke-width="1"/>
<rect x="369" y="310" width="1" height="15" fill="#5a0c2c"/>
<rect x="363.5" y="312.5" width="11" height="12" fill="#ff0000" stroke="#5a0c2c" stroke-width="1"/>
<rect x="381" y="311" width="1" height="20" fill="#5a0c2c"/>
<rect x="375.5" y="316.5" width="11" height="2" fill="#ff0000" stroke="#5a0c2c" stroke-width="1"/>
<rect x="393" y="309" width="1" height="33" fill="#5a0c2c"/>
<rect x="387.5" y="309.5" width="11" height="25" fill="#008000" stroke="#5a0c2c" stroke-width="1"/>
<rect x="405" y="290" width="1" height="12" fill="#5a0c2c"/>
<rect x="399.5" y="291.5" width="11" height="7" fill="#008000" stroke="#5a0c2c" stroke-width="1"/>
<rect x="417" y="282" width="1" height="26" fill="#5a0c2c"/>
<rect x="411.5" y="305.5" width="11" height="3" fill="#ff0000" stroke="#5a0c2c" stroke-width="1"/>
<rect x="430" y="293" width="1" height="39" fill="#5a0c2c"/>
<rect x="424.5" y="296.5" width="11" height="30" fill="#ff0000" stroke="#5a0c2c" stroke-width="1"/>
<rect x="442" y="309" width="1" height="23" fill="#5a0c2c"/>
<rect x="436.5" y="316.5" width="11" height="8" fill="#ff0000" stroke="#5a0c2c" stroke-width="1"/>
<rect x="454" y="328" width="1" height="34" fill="#5a0c2c"/>
<rect x="448.5" y="342.5" width="11" height="19" fill="#ff0000" stroke="#5a0c2c" stroke-width="1"/>
<rect x="466" y="358" width="1" height="21" fill="#5a0c2c"/>
<rect x="460.5" y="364.5" width="11" height="13" fill="#ff0000" stroke="#5a0c2c" stroke-width="1"/>
<rect x="478" y="332" width="1" height="26" fill="#5a0c2c"/>
<rect x="472.5" y="333.5" width="11" height="14" fill="#008000" stroke="#5a0c2c" stroke-width="1"/>
<rect x="490" y="323" width="1" height="30" fill="#5a0c2c"/>
<rect x="484.5" y="329.5" width="11" height="9" fill="#008000" stroke="#5a0c2c" stroke-width="1"/>
<rect x="502" y="296" width="1" height="43" fill="#5a0c2c"/>
<rect x="496.5" y="296.5" width="11" height="40" fill="#008000" stroke="#5a0c2c" stroke-width="1"/>
<rect x="514" y="296" width="1" height="16" fill="#5a0c2c"/>
<rect x="508.5" y="296.5" width="11" height="8" fill="#008000" stroke="#5a0c2c" stroke-width="1"/>
<rect x="526" y="270" width="1" height="17" fill="#5a0c2c"/>
<rect x="520.5" y="272.5" width="11" height="12" fill="#008000" stroke="#5a0c2c" stroke-width="1"/>
<rect x="538" y="264" width="1" height="20" fill="#5a0c2c"/>
<rect x="532.5" y="274.5" width="11" height="10" fill="#ff0000" stroke="#5a0c2c" stroke-width="1"/>
<rect x="550" y="268" width="1" height="38" fill="#5a0c2c"/>
<rect x="544.5" y="270.5" width="11" height="29" fill="#008000" stroke="#5a0c2c" stroke-width="1"/>
<rect x="563" y="263" width="1" height="16" fill="#5a0c2c"/>
<rect x="557.5" y="263.5" width="11" height="16" fill="#008000" stroke="#5a0c2c" stroke-width="1"/>
<rect x="575" y="261" width="1" height="21" fill="#5a0c2c"/>
<rect x="569.5" y="262.5" width="11" height="18" fill="#008000" stroke="#5a0c2c" stroke-width="1"/>
<rect x="587" y="212" width="1" height="37" fill="#5a0c2c"/>
<rect x="581.5" y="212.5" width="11" height="37" fill="#008000" stroke="#5a0c2c" stroke-width="1"/>
<rect x="599" y="210" width="1" height="31" fill="#5a0c2c"/>
<rect x="593.5" y="212.5" width="11" height="6" fill="#008000" stroke="#5a0c2c" stroke-width="1"/>
<rect x="611" y="222" width="1" height="16" fill="#5a0c2c"/>
<rect x="605.5" y="225.5" width="11" height="7" fill="#ff0000" stroke="#5a0c2c" stroke-width="1"/>
<rect x="623" y="230" width="1" height="16" fill="#5a0c2c"/>
<rect x="617.5" y="244.5" width="11" height="2" fill="#ff0000" stroke="#5a0c2c" stroke-width="1"/>
<rect x="635" y="218" width="1" height="31" fill="#5a0c2c"/>
<rect x="629.5" y="224.5" width="11" height="25" fill="#008000" stroke="#5a0c2c" stroke-width="1"/>
<rect x="647" y="216" width="1" height="38" fill="#5a0c2c"/>
<rect x="641.5" y="216.5" width="11" height="38" fill="#ff0000" stroke="#5a0c2c" stroke-width="1"/>
<rect x="659" y="233" width="1" height="39" fill="#5a0c2c"/>
<rect x="653.5" y="257.5" width="11" height="15" fill="#ff0000" stroke="#5a0c2c" stroke-width="1"/>
<rect x="671" y="263" width="1" height="28" fill="#5a0c2c"/>
<rect x="665.5" y="272.5" width="11" height="10" fill="#ff0000" stroke="#5a0c2c" stroke-width="1"/>
<rect x="683" y="264" width="1" height="14" fill="#5a0c2c"/>
<rect x="677.5" y="266.5" width="11" height="5" fill="#ff0000" stroke="#5a0c2c" stroke-width="1"/>
<rect x="695" y="246" width="1" height="28" fill="#5a0c2c"/>
<rect x="689.5" y="249.5" width="11" height="22" fill="#008000" stroke="#5a0c2c" stroke-width="1"/>
<rect x="708" y="259" width="1" height="14" fill="#5a0c2c"/>
<rect x="702.5" y="259.5" width="11" height="12" fill="#ff0000" stroke="#5a0c2c" stroke-width="1"/>
<rect x="720" y="255" width="1" height="29" fill="#5a0c2c"/>
<rect x="714.5" y="262.5" width="11" height="14" fill="#ff0000" stroke="#5a0c2c" stroke-width="1"/>
<rect x="732" y="265" width="1" height="17" fill="#5a0c2c"/>
<rect x="726" y="277" width="12" height="2" fill="#5a0c2c"/>
<rect x="744" y="285" width="1" height="29" fill="#5a0c2c"/>
<rect x="738.5" y="291.5" width="11" height="21" fill="#ff0000" stroke="#5a0c2c" stroke-width="1"/>
<rect x="756" y="303" width="1" height="17" fill="#5a0c2c"/>
<rect x="750" y="308" width="12" height="1" fill="#008000"/>
<rect x="756" y="303" width="1" height="17" fill="#5a0c2c"/>
<rect x="768" y="308" width="1" height="14" fill="#5a0c2c"/>
<rect x="762.5" y="308.5" width="11" height="6" fill="#008000" stroke="#5a0c2c" stroke-width="1"/>
<rect x="780" y="286" width="1" height="18" fill="#5a0c2c"/>
<rect x="774.5" y="289.5" width="11" height="10" fill="#008000" stroke="#5a0c2c" stroke-width="1"/>
<rect x="792" y="283" width="1" height="16" fill="#5a0c2c"/>
<rect x="786.5" y="288.5" width="11" height="8" fill="#ff0000" stroke="#5a0c2c" stroke-width="1"/>
<rect x="804" y="311" width="1" height="3" fill="#5a0c2c"/>
<rect x="798.5" y="311.5" width="11" height="3" fill="#ff0000" stroke="#5a0c2c" stroke-width="1"/>
<rect x="816" y="305" width="1" height="27" fill="#5a0c2c"/>
<rect x="810.5" y="309.5" width="11" height="19" fill="#ff0000" stroke="#5a0c2c" stroke-width="1"/>
<rect x="828" y="296" width="1" height="40" fill="#5a0c2c"/>
<rect x="822.5" y="296.5" width="11" height="38" fill="#008000" stroke="#5a0c2c" stroke-width="1"/>
<rect x="841" y="283" width="1" height="13" fill="#5a0c2c"/>
<rect x="835.5" y="287.5" width="11" height="7" fill="#008000" stroke="#5a0c2c" stroke-width="1"/>
<rect x="853" y="288" width="1" height="17" fill="#5a0c2c"/>
<rect x="847.5" y="294.5" width="11" height="11" fill="#008000" stroke="#5a0c2c" stroke-width="1"/>
<rect x="865" y="259" width="1" height="43" fill="#5a0c2c"/>
<rect x="859.5" y="262.5" width="11" height="30" fill="#008000" stroke="#5a0c2c" stroke-width="1"/>
<rect x="877" y="264" width="1" height="16" fill="#5a0c2c"/>
<rect x="871.5" y="270.5" width="11" height="10" fill="#ff0000" stroke="#5a0c2c" stroke-width="1"/>
<rect x="889" y="267" width="1" height="15" fill="#5a0c2c"/>
<rect x="883.5" y="270.5" width="11" height="12" fill="#ff0000" stroke="#5a0c2c" stroke-width="1"/>
<rect x="901" y="298" width="1" height="39" fill="#5a0c2c"/>
<rect x="895.5" y="304.5" width="11" height="28" fill="#ff0000" stroke="#5a0c2c" stroke-width="1"/>
<rect x="913" y="298" width="1" height="17" fill="#5a0c2c"/>
<rect x="907.5" y="304.5" width="11" height="2" fill="#ff0000" stroke="#5a0c2c" stroke-width="1"/>
<rect x="925" y="300" width="1" height="20" fill="#5a0c2c"/>
<rect x="919.5" y="311.5" width="11" height="9" fill="#ff0000" stroke="#5a0c2c" stroke-width="1"/>
<rect x="937" y="321" width="1" height="37" fill="#5a0c2c"/>
<rect x="931.5" y="323.5" width="11" height="19" fill="#ff0000" stroke="#5a0c2c" stroke-width="1"/>
<rect x="949" y="341" width="1" height="20" fill="#5a0c2c"/>
<rect x="943.5" y="345.5" width="11" height="14" fill="#ff0000" stroke="#5a0c2c" stroke-width="1"/>
<rect x="961" y="341" width="1" height="13" fill="#5a0c2c"/>
<rect x="955.5" y="343.5" width="11" height="11" fill="#ff0000" stroke="#5a0c2c" stroke-width="1"/>
<rect x="973" y="374" width="1" height="37" fill="#5a0c2c"/>
<rect x="967.5" y="375.5" width="11" height="25" fill="#ff0000" stroke="#5a0c2c" stroke-width="1"/>
<rect x="986" y="401" width="1" height="38" fill="#5a0c2c"/>
<rect x="980.5" y="418.5" width="11" height="21" fill="#ff0000" stroke="#5a0c2c" stroke-width="1"/>
<rect x="998" y="411" width="1" height="37" fill="#5a0c2c"/>
<rect x="992.5" y="416.5" width="11" height="23" fill="#ff0000" stroke="#5a0c2c" stroke-width="1"/>
<rect x="1010" y="421" width="1" height="41" fill="#5a0c2c"/>
<rect x="1004.5" y="426.5" width="11" height="36" fill="#008000" stroke="#5a0c2c" stroke-width="1"/>
<rect x="1022" y="364" width="1" height="37" fill="#5a0c2c"/>
<rect x="1016.5" y="364.5" width="11" height="26" fill="#008000" stroke="#5a0c2c" stroke-width="1"/>
<rect x="1034" y="347" width="1" height="31" fill="#5a0c2c"/>
<rect x="1028.5" y="359.5" width="11" height="7" fill="#ff0000" stroke="#5a0c2c" stroke-width="1"/>
<rect x="1046" y="380" width="1" height="21" fill="#5a0c2c"/>
<rect x="1040.5" y="382.5" width="11" height="17" fill="#ff0000" stroke="#5a0c2c" stroke-width="1"/>
<rect x="1058" y="384" width="1" height="15" fill="#5a0c2c"/>
<rect x="1052.5" y="390.5" width="11" height="6" fill="#ff0000" stroke="#5a0c2c" stroke-width="1"/>
<rect x="1070" y="358" width="1" height="42" fill="#5a0c2c"/>
<rect x="1064.5" y="358.5" width="11" height="38" fill="#008000" stroke="#5a0c2c" stroke-width="1"/>
<rect x="1082" y="347" width="1" height="33" fill="#5a0c2c"/>
<rect x="1076.5" y="353.5" width="11" height="23" fill="#008000" stroke="#5a0c2c" stroke-width="1"/>
<rect x="1094" y="359" width="1" height="55" fill="#5a0c2c"/>
<rect x="1088.5" y="359.5" width="11" height="55" fill="#ff0000" stroke="#5a0c2c" stroke-width="1"/>
<rect x="1106" y="388" width="1" height="62" fill="#5a0c2c"/>
<rect x="1100.5" y="388.5" width="11" height="56" fill="#008000" stroke="#5a0c2c" stroke-width="1"/>
<rect x="1119" y="355" width="1" height="34" fill="#5a0c2c"/>
<rect x="1113.5" y="374.5" width="11" height="15" fill="#008000" stroke="#5a0c2c" stroke-width="1"/>
<rect x="1131" y="365" width="1" height="48" fill="#5a0c2c"/>
<rect x="1125.5" y="365.5" width="11" height="31" fill="#ff0000" stroke="#5a0c2c" stroke-width="1"/>
<rect x="1143" y="398" width="1" height="30" fill="#5a0c2c"/>
<rect x="1137" y="403" width="12" height="2" fill="#5a0c2c"/>
<rect x="1155" y="440" width="1" height="35" fill="#5a0c2c"/>
<rect x="1149.5" y="442.5" width="11" height="27" fill="#ff0000" stroke="#5a0c2c" stroke-width="1"/>
<rect x="1167" y="441" width="1" height="57" fill="#5a0c2c"/>
<rect x="1161.5" y="444.5" width="11" height="40" fill="#ff0000" stroke="#5a0c2c" stroke-width="1"/>
<rect x="1179" y="468" width="1" height="69" fill="#5a0c2c"/>
<rect x="1173.5" y="495.5" width="11" height="31" fill="#008000" stroke="#5a0c2c" stroke-width="1"/>
<rect x="1191" y="472" width="1" height="25" fill="#5a0c2c"/>
<rect x="1185.5" y="480.5" width="11" height="13" fill="#ff0000" stroke="#5a0c2c" stroke-width="1"/>
<rect x="1203" y="545" width="1" height="87" fill="#5a0c2c"/>
<rect x="1197.5" y="556.5" width="11" height="21" fill="#ff0000" stroke="#5a0c2c" stroke-width="1"/>
<rect x="1215" y="543" width="1" height="34" fill="#5a0c2c"/>
<rect x="1209.5" y="543.5" width="11" height="22" fill="#ff0000" stroke="#5a0c2c" stroke-width="1"/>
<line x1="170" y1="86.5" x2="382" y2="129.4" stroke="#3cdc3c" stroke-width="1.1"/>
<line x1="203.8" y1="86.5" x2="402" y2="154.3" stroke="#3cdc3c" stroke-width="1.1"/>
<line x1="608" y1="211.5" x2="786" y2="211.5" stroke="#3cdc3c" stroke-width="1.1"/>
<line x1="608" y1="209" x2="1043" y2="314" stroke="#3cdc3c" stroke-width="1.1"/>
<line x1="538" y1="249.5" x2="702" y2="249.5" stroke="#3cdc3c" stroke-width="1.1"/>
<line x1="1155" y1="346.5" x2="1278" y2="346.5" stroke="#3cdc3c" stroke-width="1.1"/>
<line x1="1155" y1="346.5" x2="1227" y2="633.3" stroke="#3cdc3c" stroke-width="1.1"/>
<line x1="1155" y1="455.3" x2="1278" y2="455.3" stroke="#3cdc3c" stroke-width="1.1"/>
<line x1="1155" y1="489.2" x2="1278" y2="489.2" stroke="#3cdc3c" stroke-width="1.1"/>
<line x1="1155" y1="523.4" x2="1278" y2="523.4" stroke="#3cdc3c" stroke-width="1.1"/>
<line x1="1155" y1="565.4" x2="1278" y2="565.4" stroke="#3cdc3c" stroke-width="1.1"/>
<line x1="1155" y1="633.3" x2="1278" y2="633.3" stroke="#3cdc3c" stroke-width="1.1"/>
</g>
<path d="M33.0 120h5v5.5h2l-4.5 8l-4.5 -8h2z" fill="#ff0000"/>
<path d="M38.0 169h5v5.5h2l-4.5 8l-4.5 -8h2z" fill="#ff0000"/>
<path d="M488 362l4.5 8h-2v5.5h-5v-5.5h-2z" fill="#00ff00"/>
<path d="M528 292.5l4.5 8h-2v5.5h-5v-5.5h-2z" fill="#00ff00"/>
<path d="M588 254.4l4.5 8h-2v5.5h-5v-5.5h-2z" fill="#00ff00"/>
<path d="M921 320l4.5 8h-2v5.5h-5v-5.5h-2z" fill="#00ff00"/>
<path d="M1017.5 408l4.5 8h-2v5.5h-5v-5.5h-2z" fill="#00ff00"/>
<path d="M1154.0 413h5v5.5h2l-4.5 8l-4.5 -8h2z" fill="#ff0000"/>
<path d="M1200.0 502h5v5.5h2l-4.5 8l-4.5 -8h2z" fill="#ff0000"/>
<path d="M967.5 351h5v5.5h2l-4.5 8l-4.5 -8h2z" fill="#ff0000"/>
<path d="M862.5 279h5v5.5h2l-4.5 8l-4.5 -8h2z" fill="#ff0000"/>
<path d="M894.0 275h5v5.5h2l-4.5 8l-4.5 -8h2z" fill="#ff0000"/>
<path d="M533 274h8l5 6l-4 9l-3-5h-6z" fill="#ff0000"/>
<rect x="1233.5" y="557.5" width="42" height="14" fill="#ffffff" stroke="#e89040"/>
<line x1="1234" y1="565.4" x2="1278" y2="565.4" stroke="#3cdc3c" stroke-width="1.2"/>
<text x="1254.5" y="568.5" font-size="10" fill="#107010" font-weight="normal" text-anchor="middle" >2015.30</text>
<g clip-path="url(#rsiclip)">
<polyline points="199.9,787.8 212.0,777.0 224.1,771.0 236.2,766.0 248.3,771.0 260.4,780.0 272.4,778.0 284.5,774.0 296.6,768.4 308.7,778.0 320.8,780.0 332.9,782.0 345.0,785.0 357.0,786.0 369.1,788.0 381.2,790.0 393.3,775.0 405.4,759.0 417.5,767.0 429.6,776.6 441.7,774.3 453.7,787.2 465.8,793.0 477.9,757.9 490.0,754.8 502.1,733.3 514.2,734.4 526.3,720.4 538.4,727.0 550.4,718.7 562.5,716.4 574.6,715.0 586.7,692.3 598.8,693.4 610.9,705.2 623.0,715.7 635.1,705.2 647.1,722.7 659.2,731.4 671.3,737.5 683.4,731.4 695.5,720.4 707.6,732.1 719.7,734.4 731.7,736.0 743.8,752.0 755.9,749.2 768.0,749.2 780.1,737.3 792.2,739.8 804.3,749.2 816.4,756.2 828.4,736.0 840.5,729.8 852.6,734.4 864.7,717.3 876.8,725.8 888.9,727.4 901.0,752.0 913.1,737.5 925.1,743.8 937.2,752.0 949.3,759.0 961.4,756.2 973.5,770.8 985.6,780.6 997.7,781.3 1009.7,774.3 1021.8,740.8 1033.9,740.8 1046.0,753.2 1058.1,750.9 1070.2,733.7 1082.3,731.4 1094.4,752.0 1106.4,741.5 1118.5,736.3 1130.6,743.8 1142.7,746.2 1154.8,764.9 1166.9,768.9 1179.0,772.0 1191.1,770.3 1203.1,786.7 1215.2,781.0" fill="none" stroke="#3cdc3c" stroke-width="1.1" />
</g>
<rect x="1245.5" y="773.5" width="30" height="14" fill="#ffffff" stroke="#3cdc3c"/>
<text x="1260.5" y="784.5" font-size="10" fill="#000" font-weight="normal" text-anchor="middle" >27.37</text>
<g clip-path="url(#stoclip)">
<polyline points="127.4,906.0 139.5,907.8 151.6,918.0 163.7,928.9 175.7,929.0 187.8,922.0 199.9,910.0 212.0,897.0 224.1,870.0 272.4,840.0 332.9,835.0 393.3,845.0 429.6,858.6 441.7,875.0 453.7,905.0 465.8,925.4 477.9,925.4 490.0,903.1 502.1,872.7 514.2,846.9 526.3,820.6 538.4,819.2 550.4,820.6 562.5,824.6 574.6,823.4 586.7,819.9 598.8,816.4 610.9,821.6 623.0,834.0 635.1,853.9 647.1,876.2 659.2,894.9 671.3,913.7 683.4,923.0 695.5,921.9 707.6,905.5 719.7,886.2 731.7,892.6 743.8,906.6 755.9,924.2 768.0,929.4 780.1,920.7 792.2,906.6 804.3,887.9 816.4,889.1 828.4,896.1 840.5,891.4 852.6,858.6 864.7,835.2 876.8,827.7 888.9,834.7 901.0,863.3 913.1,884.4 925.1,907.3 937.2,908.3 949.3,914.8 961.4,921.9 973.5,928.9 985.6,931.2 997.7,934.0 1009.7,931.3 1021.8,911.6 1033.9,889.7 1046.0,855.0 1058.1,847.7 1070.2,849.2 1082.3,850.8 1094.4,854.7 1106.4,863.4 1118.5,879.9 1130.6,885.8 1142.7,887.1 1154.8,898.4 1166.9,913.8 1179.0,928.0 1191.1,934.0 1203.1,936.0 1215.2,936.0" fill="none" stroke="#4a0828"  stroke-dasharray="2.5 2" stroke-width="1.2"/>
<polyline points="103.2,910.6 115.3,893.3 127.4,914.4 139.5,919.0 151.6,932.4 163.7,936.0 175.7,932.0 187.8,918.0 199.9,900.0 212.0,878.0 224.1,850.0 272.4,830.0 332.9,830.0 393.3,850.0 429.6,877.3 441.7,912.5 453.7,936.0 465.8,931.2 477.9,910.1 490.0,879.7 502.1,826.2 514.2,818.3 526.3,816.0 538.4,822.7 550.4,824.6 562.5,827.0 574.6,816.0 586.7,816.4 598.8,816.4 610.9,828.1 623.0,855.1 635.1,870.3 647.1,896.1 659.2,912.5 671.3,931.2 683.4,927.7 695.5,900.8 707.6,882.0 719.7,875.5 731.7,913.7 743.8,928.4 755.9,931.2 768.0,928.4 780.1,903.1 792.2,879.2 804.3,876.2 816.4,912.0 828.4,898.4 840.5,863.3 852.6,829.3 864.7,821.6 876.8,832.8 888.9,846.4 901.0,907.3 913.1,906.6 925.1,910.1 937.2,907.3 949.3,926.1 961.4,930.8 973.5,930.8 985.6,936.0 997.7,936.0 1009.7,929.0 1021.8,887.5 1033.9,853.6 1046.0,834.6 1058.1,852.5 1070.2,859.1 1082.3,840.5 1094.4,863.4 1106.4,883.1 1118.5,893.0 1130.6,882.7 1142.7,885.8 1154.8,919.2 1166.9,930.2 1179.0,938.0 1191.1,938.0 1203.1,934.0 1215.2,928.6" fill="none" stroke="#3cdc3c" stroke-width="1.1" />
</g>
<rect x="1251.5" y="920.5" width="24" height="14" fill="#ffffff" stroke="#5a0c2c"/>
<rect x="1251" y="920" width="25" height="1" fill="#3cdc3c"/>
<text x="1263.5" y="931" font-size="10" fill="#000" font-weight="normal" text-anchor="middle" >2.63</text>
<!--POPUP-->
<rect x="210" y="770" width="220" height="170" fill="#d4d0c8" />
<rect x="210" y="770" width="219" height="1" fill="#d4d0c8"/>
<rect x="210" y="770" width="1" height="170" fill="#d4d0c8"/>
<rect x="211" y="771" width="217" height="1" fill="#ffffff"/>
<rect x="211" y="771" width="1" height="169" fill="#ffffff"/>
<rect x="428" y="771" width="1" height="169" fill="#808080"/>
<rect x="429" y="770" width="1" height="170" fill="#404040"/>
<rect x="213" y="773" width="214" height="15" fill="url(#ig)" />
<text x="218" y="784" font-size="11" fill="#d4d0c8" font-weight="bold" text-anchor="start" letter-spacing="0.6" >WIG20</text>
<rect x="214" y="790" width="212" height="1" fill="#ffffff"/>
<rect x="214" y="805" width="212" height="1" fill="#ffffff"/>
<rect x="333" y="790" width="1" height="150" fill="#ffffff"/>
<rect x="388" y="790" width="1" height="150" fill="#ffffff"/>
<rect x="214" y="790" width="1" height="150" fill="#ffffff"/>
<rect x="425" y="790" width="1" height="150" fill="#ffffff"/>
<text x="224" y="801" font-size="10.6" fill="#000" font-weight="normal" text-anchor="start" >26 08 08</text>
<text x="380" y="801" font-size="10.6" fill="#000" font-weight="normal" text-anchor="end" >wartość</text>
<text x="390" y="801" font-size="10.6" fill="#000" font-weight="normal" text-anchor="start" >zmiana</text>
<text x="224" y="818" font-size="10.6" fill="#000" font-weight="normal" text-anchor="start" >cena</text>
<text x="383" y="818" font-size="10.6" fill="#000" font-weight="normal" text-anchor="end" >2544.32</text>
<text x="393" y="818" font-size="10.6" fill="#000" font-weight="normal" text-anchor="start" >-1.37</text>
<text x="224" y="831" font-size="10.6" fill="#000" font-weight="normal" text-anchor="start" >otwarcie</text>
<text x="383" y="831" font-size="10.6" fill="#000" font-weight="normal" text-anchor="end" >2550.43</text>
<text x="393" y="831" font-size="10.6" fill="#000" font-weight="normal" text-anchor="start" >-1.77</text>
<text x="224" y="844" font-size="10.6" fill="#000" font-weight="normal" text-anchor="start" >max</text>
<text x="383" y="844" font-size="10.6" fill="#000" font-weight="normal" text-anchor="end" >2565.77</text>
<text x="393" y="844" font-size="10.6" fill="#000" font-weight="normal" text-anchor="start" >-1.56</text>
<text x="224" y="857" font-size="10.6" fill="#000" font-weight="normal" text-anchor="start" >min</text>
<text x="383" y="857" font-size="10.6" fill="#000" font-weight="normal" text-anchor="end" >2541.67</text>
<text x="393" y="857" font-size="10.6" fill="#000" font-weight="normal" text-anchor="start" >-1.22</text>
<text x="224" y="870" font-size="10.6" fill="#000" font-weight="normal" text-anchor="start" >LOP</text>
<text x="224" y="883" font-size="10.6" fill="#000" font-weight="normal" text-anchor="start" >średnia (15)</text>
<text x="383" y="883" font-size="10.6" fill="#000" font-weight="normal" text-anchor="end" >2612.43</text>
<text x="393" y="883" font-size="10.6" fill="#000" font-weight="normal" text-anchor="start" >-0.36</text>
<text x="224" y="896" font-size="10.6" fill="#000" font-weight="normal" text-anchor="start" >średnia (55)</text>
<text x="383" y="896" font-size="10.6" fill="#000" font-weight="normal" text-anchor="end" >2615.48</text>
<text x="393" y="896" font-size="10.6" fill="#000" font-weight="normal" text-anchor="start" >-0.19</text>
<text x="224" y="909" font-size="10.6" fill="#000" font-weight="normal" text-anchor="start" >RSI (14)</text>
<text x="383" y="909" font-size="10.6" fill="#000" font-weight="normal" text-anchor="end" >41.24</text>
<text x="393" y="909" font-size="10.6" fill="#000" font-weight="normal" text-anchor="start" >-8.59</text>
<text x="224" y="922" font-size="10.6" fill="#000" font-weight="normal" text-anchor="start" >STO (5)</text>
<text x="383" y="922" font-size="10.6" fill="#000" font-weight="normal" text-anchor="end" >48.88</text>
<text x="393" y="922" font-size="10.6" fill="#000" font-weight="normal" text-anchor="start" >4.97</text>
<text x="224" y="935" font-size="10.6" fill="#000" font-weight="normal" text-anchor="start" >sygnał STO (3)</text>
<text x="383" y="935" font-size="10.6" fill="#000" font-weight="normal" text-anchor="end" >40.91</text>
<text x="393" y="935" font-size="10.6" fill="#000" font-weight="normal" text-anchor="start" >54.64</text>
<rect x="0" y="932" width="1280" height="28" fill="#d4d0c8" />
<rect x="0" y="932" width="1280" height="1" fill="#d4d0c8"/>
<rect x="0" y="933" width="1280" height="1" fill="#ffffff"/>
<rect x="2" y="936" width="52" height="22" fill="#d4d0c8" />
<rect x="2" y="936" width="52" height="1" fill="#ffffff"/>
<rect x="2" y="936" width="1" height="22" fill="#ffffff"/>
<rect x="2" y="957" width="52" height="1" fill="#404040"/>
<rect x="53" y="936" width="1" height="22" fill="#404040"/>
<rect x="3" y="956" width="50" height="1" fill="#808080"/>
<rect x="52" y="937" width="1" height="20" fill="#808080"/>
<path d="M6 941.5q2.5-1 5 0v4.5q-2.5-1-5 0z" fill="#e8582a"/>
<path d="M11.5 941.5q2.5 1 5 0v4.5q-2.5 1-5 0z" fill="#58b030"/>
<path d="M5 947q2.5-1 5 0v4.5q-2.5-1-5 0z" fill="#3a7ad8"/>
<path d="M10.5 947q2.5 1 5 0v4.5q-2.5 1-5 0z" fill="#f0c020"/>
<text x="21.5" y="951" font-size="11.5" fill="#000" font-weight="bold" text-anchor="start" letter-spacing="0.5" >Start</text>
<rect x="62" y="940" width="13" height="14" rx="2" fill="#2a5ab0"/>
<rect x="64" y="942" width="9" height="10" fill="#f0f8ff"/>
<path d="M66 949l4-5" stroke="#2a5ab0" stroke-width="1.5"/><rect x="65" y="949" width="2" height="1" fill="#000"/>
<rect x="75" y="945" width="2" height="2" fill="#a06020"/>
<rect x="91" y="944" width="9" height="9" fill="#f0f4ff" stroke="#2a6ac8"/>
<path d="M86 946l5-5v3h6v4h-6v3z" fill="#3a88e0"/>
<path d="M87 950h7l-3 4h-4z" fill="#2a6ac8"/>
<rect x="96" y="946" width="2" height="2" fill="#c04020"/>
<circle cx="117.5" cy="946.5" r="4.8" fill="none" stroke="#2a84dc" stroke-width="2.6" stroke-dasharray="0 6.5 23.7"/>
<rect x="112.5" y="945.9" width="10" height="2" fill="#2a84dc"/>
<path d="M110.5 953.5Q109 943 123.5 939.5" fill="none" stroke="#e8b828" stroke-width="1.4"/>
<path d="M137 941.5l3 2.5l-3 2.5M141 941.5l3 2.5l-3 2.5" fill="none" stroke="#000" stroke-width="1.5"/>
<rect x="148" y="936" width="92" height="22" fill="#d4d0c8" />
<rect x="148" y="936" width="92" height="1" fill="#ffffff"/>
<rect x="148" y="936" width="1" height="22" fill="#ffffff"/>
<rect x="148" y="957" width="92" height="1" fill="#404040"/>
<rect x="239" y="936" width="1" height="22" fill="#404040"/>
<rect x="149" y="956" width="90" height="1" fill="#808080"/>
<rect x="238" y="937" width="1" height="20" fill="#808080"/>
<rect x="159" y="944" width="9" height="9" fill="#f0f4ff" stroke="#2a6ac8"/>
<path d="M154 946l5-5v3h6v4h-6v3z" fill="#3a88e0"/>
<path d="M155 950h7l-3 4h-4z" fill="#2a6ac8"/>
<rect x="164" y="946" width="2" height="2" fill="#c04020"/>
<text x="172" y="951" font-size="11" fill="#000" font-weight="normal" text-anchor="start" letter-spacing="0.3" >Wersje ro...</text>
<rect x="242" y="936" width="93" height="22" fill="url(#dith)" />
<rect x="242" y="936" width="93" height="1" fill="#404040"/>
<rect x="242" y="936" width="1" height="22" fill="#404040"/>
<rect x="243" y="937" width="91" height="1" fill="#808080"/>
<rect x="243" y="937" width="1" height="20" fill="#808080"/>
<rect x="242" y="957" width="93" height="1" fill="#ffffff"/>
<rect x="334" y="936" width="1" height="22" fill="#ffffff"/>
<rect x="247" y="939" width="16" height="16" fill="#ffffff" />
<circle cx="255" cy="947" r="7" fill="#1a7a4a"/>
<circle cx="255" cy="947" r="5.8" fill="#c8f0d8"/>
<circle cx="255" cy="947.3" r="3.4" fill="#0a6a3a"/>
<circle cx="255.00" cy="944.70" r="2.1" fill="#0a6a3a"/>
<circle cx="257.47" cy="946.50" r="2.1" fill="#0a6a3a"/>
<circle cx="256.53" cy="949.40" r="2.1" fill="#0a6a3a"/>
<circle cx="253.47" cy="949.40" r="2.1" fill="#0a6a3a"/>
<circle cx="252.53" cy="946.50" r="2.1" fill="#0a6a3a"/>
<text x="269" y="951" font-size="11" fill="#000" font-weight="bold" text-anchor="start" letter-spacing="0.25" >Notowani...</text>
<rect x="339" y="936" width="92" height="22" fill="#d4d0c8" />
<rect x="339" y="936" width="92" height="1" fill="#ffffff"/>
<rect x="339" y="936" width="1" height="22" fill="#ffffff"/>
<rect x="339" y="957" width="92" height="1" fill="#404040"/>
<rect x="430" y="936" width="1" height="22" fill="#404040"/>
<rect x="340" y="956" width="90" height="1" fill="#808080"/>
<rect x="429" y="937" width="1" height="20" fill="#808080"/>
<circle cx="351.5" cy="947.5" r="4.8" fill="none" stroke="#2a84dc" stroke-width="2.6" stroke-dasharray="0 6.5 23.7"/>
<rect x="346.5" y="946.9" width="10" height="2" fill="#2a84dc"/>
<path d="M344.5 954.5Q343 944 357.5 940.5" fill="none" stroke="#e8b828" stroke-width="1.4"/>
<text x="363" y="951" font-size="11" fill="#000" font-weight="normal" text-anchor="start" letter-spacing="0.3" >ifutures.pl ...</text>
<rect x="435" y="936" width="92" height="22" fill="#d4d0c8" />
<rect x="435" y="936" width="92" height="1" fill="#ffffff"/>
<rect x="435" y="936" width="1" height="22" fill="#ffffff"/>
<rect x="435" y="957" width="92" height="1" fill="#404040"/>
<rect x="526" y="936" width="1" height="22" fill="#404040"/>
<rect x="436" y="956" width="90" height="1" fill="#808080"/>
<rect x="525" y="937" width="1" height="20" fill="#808080"/>
<rect x="440" y="939" width="11" height="9" fill="#1a2a8a"/><text x="445.5" y="947" font-size="8" font-weight="bold" fill="#fff" text-anchor="middle">m</text>
<rect x="439" y="945" width="8" height="8" fill="#e02020"/><circle cx="451" cy="951" r="4" fill="#f0c000"/>
<text x="459" y="951" font-size="11" fill="#000" font-weight="normal" text-anchor="start" letter-spacing="0.3" >mIRC</text>
<rect x="531" y="936" width="92" height="22" fill="#d4d0c8" />
<rect x="531" y="936" width="92" height="1" fill="#ffffff"/>
<rect x="531" y="936" width="1" height="22" fill="#ffffff"/>
<rect x="531" y="957" width="92" height="1" fill="#404040"/>
<rect x="622" y="936" width="1" height="22" fill="#404040"/>
<rect x="532" y="956" width="90" height="1" fill="#808080"/>
<rect x="621" y="937" width="1" height="20" fill="#808080"/>
<circle cx="543.5" cy="947.5" r="4.8" fill="none" stroke="#2a84dc" stroke-width="2.6" stroke-dasharray="0 6.5 23.7"/>
<rect x="538.5" y="946.9" width="10" height="2" fill="#2a84dc"/>
<path d="M536.5 954.5Q535 944 549.5 940.5" fill="none" stroke="#e8b828" stroke-width="1.4"/>
<text x="555" y="951" font-size="11" fill="#000" font-weight="normal" text-anchor="start" letter-spacing="0.3" >Outstandin...</text>
<rect x="627" y="936" width="92" height="22" fill="#d4d0c8" />
<rect x="627" y="936" width="92" height="1" fill="#ffffff"/>
<rect x="627" y="936" width="1" height="22" fill="#ffffff"/>
<rect x="627" y="957" width="92" height="1" fill="#404040"/>
<rect x="718" y="936" width="1" height="22" fill="#404040"/>
<rect x="628" y="956" width="90" height="1" fill="#808080"/>
<rect x="717" y="937" width="1" height="20" fill="#808080"/>
<circle cx="639.5" cy="947.5" r="4.8" fill="none" stroke="#2a84dc" stroke-width="2.6" stroke-dasharray="0 6.5 23.7"/>
<rect x="634.5" y="946.9" width="10" height="2" fill="#2a84dc"/>
<path d="M632.5 954.5Q631 944 645.5 940.5" fill="none" stroke="#e8b828" stroke-width="1.4"/>
<text x="651" y="951" font-size="11" fill="#000" font-weight="normal" text-anchor="start" letter-spacing="0.3" >Stock Quot...</text>
<rect x="723" y="936" width="92" height="22" fill="#d4d0c8" />
<rect x="723" y="936" width="92" height="1" fill="#ffffff"/>
<rect x="723" y="936" width="1" height="22" fill="#ffffff"/>
<rect x="723" y="957" width="92" height="1" fill="#404040"/>
<rect x="814" y="936" width="1" height="22" fill="#404040"/>
<rect x="724" y="956" width="90" height="1" fill="#808080"/>
<rect x="813" y="937" width="1" height="20" fill="#808080"/>
<circle cx="735.5" cy="947.5" r="4.8" fill="none" stroke="#2a84dc" stroke-width="2.6" stroke-dasharray="0 6.5 23.7"/>
<rect x="730.5" y="946.9" width="10" height="2" fill="#2a84dc"/>
<path d="M728.5 954.5Q727 944 741.5 940.5" fill="none" stroke="#e8b828" stroke-width="1.4"/>
<text x="747" y="951" font-size="11" fill="#000" font-weight="normal" text-anchor="start" letter-spacing="0.3" >Online Inv...</text>
<rect x="819" y="936" width="92" height="22" fill="#d4d0c8" />
<rect x="819" y="936" width="92" height="1" fill="#ffffff"/>
<rect x="819" y="936" width="1" height="22" fill="#ffffff"/>
<rect x="819" y="957" width="92" height="1" fill="#404040"/>
<rect x="910" y="936" width="1" height="22" fill="#404040"/>
<rect x="820" y="956" width="90" height="1" fill="#808080"/>
<rect x="909" y="937" width="1" height="20" fill="#808080"/>
<rect x="823.5" y="940.5" width="6" height="13" fill="#808080" stroke="#000"/><rect x="829.5" y="942.5" width="8" height="11" fill="#c0c0c0" stroke="#000"/>
<text x="843" y="951" font-size="11" fill="#000" font-weight="normal" text-anchor="start" letter-spacing="0.3" >TV Kablowa</text>
<rect x="915" y="936" width="92" height="22" fill="#d4d0c8" />
<rect x="915" y="936" width="92" height="1" fill="#ffffff"/>
<rect x="915" y="936" width="1" height="22" fill="#ffffff"/>
<rect x="915" y="957" width="92" height="1" fill="#404040"/>
<rect x="1006" y="936" width="1" height="22" fill="#404040"/>
<rect x="916" y="956" width="90" height="1" fill="#808080"/>
<rect x="1005" y="937" width="1" height="20" fill="#808080"/>
<rect x="919" y="940" width="15" height="13" rx="1" fill="#101010"/><rect x="921" y="942" width="11" height="9" fill="#20a0a0"/>
<text x="939" y="951" font-size="11" fill="#000" font-weight="normal" text-anchor="start" letter-spacing="0.3" >IvCAP</text>
<rect x="1011" y="936" width="92" height="22" fill="#d4d0c8" />
<rect x="1011" y="936" width="92" height="1" fill="#ffffff"/>
<rect x="1011" y="936" width="1" height="22" fill="#ffffff"/>
<rect x="1011" y="957" width="92" height="1" fill="#404040"/>
<rect x="1102" y="936" width="1" height="22" fill="#404040"/>
<rect x="1012" y="956" width="90" height="1" fill="#808080"/>
<rect x="1101" y="937" width="1" height="20" fill="#808080"/>
<rect x="1015" y="939" width="15" height="15" fill="#f8e8c0"/><circle cx="1022.5" cy="947" r="5" fill="#f08020"/><circle cx="1022.5" cy="947" r="2.5" fill="#fff0d0"/>
<text x="1035" y="951" font-size="11" fill="#000" font-weight="normal" text-anchor="start" letter-spacing="0.3" >XnView - [...</text>
<rect x="1111" y="936" width="166" height="22" fill="#d4d0c8"/>
<rect x="1111" y="936" width="166" height="1" fill="#808080"/>
<rect x="1111" y="936" width="1" height="22" fill="#808080"/>
<rect x="1111" y="957" width="166" height="1" fill="#ffffff"/>
<rect x="1276" y="936" width="1" height="22" fill="#ffffff"/>
<path d="M1121 945l-3 2.5l3 2.5M1125 945l-3 2.5l3 2.5" fill="none" stroke="#000" stroke-width="1.5"/>
<circle cx="1136.5" cy="947" r="5" fill="#ffffff" stroke="#e03030" stroke-width="1.5"/>
<path d="M1136.5 939v3M1136.5 952v3M1128.5 947h3M1141.5 947h3M1131 941.5l2 2M1140 950.5l2 2M1142 941.5l-2 2M1133 950.5l-2 2" stroke="#e03030" stroke-width="1.3"/>
<rect x="1147" y="939" width="16" height="16" fill="#000820"/><ellipse cx="1155" cy="947" rx="6" ry="4.5" fill="#5a8ae0"/><path d="M1150 949q3-4 10-3" stroke="#ffffff" fill="none"/>
<rect x="1165" y="940" width="16" height="13" fill="#e02020"/><text x="1173" y="951" font-size="9" font-weight="bold" fill="#ffffff" text-anchor="middle" font-style="italic">ATI</text>
<rect x="1186.5" y="940.5" width="13" height="12" fill="#ffffff" stroke="#000"/><rect x="1187" y="941" width="12" height="3" fill="#1030c0"/><rect x="1184" y="948" width="7" height="7" fill="#606060" stroke="#000"/>
<rect x="1202" y="940" width="14" height="14" fill="#808080"/><rect x="1202" y="940" width="7" height="7" fill="#404040"/><rect x="1209" y="940" width="7" height="7" fill="#000"/><rect x="1202" y="947" width="7" height="7" fill="#000"/>
<rect x="1219" y="939" width="15" height="16" fill="#f0d880"/><rect x="1222" y="942" width="3" height="10" fill="#3060c0"/><rect x="1227" y="942" width="3" height="10" fill="#3060c0"/>
<text x="1242" y="951" font-size="11" fill="#000" font-weight="normal" text-anchor="start" >19:22</text>
<rect x="661" y="0" width="169" height="66" fill="#d4d0c8" />
<rect x="661" y="0" width="1" height="66" fill="#ffffff"/>
<rect x="829" y="0" width="1" height="66" fill="#404040"/>
<rect x="828" y="0" width="1" height="65" fill="#808080"/>
<rect x="661" y="65" width="169" height="1" fill="#404040"/>
<rect x="662" y="64" width="167" height="1" fill="#808080"/>
<rect x="664" y="0" width="163" height="15" fill="url(#ig)" />
<text x="666" y="12" font-size="11" fill="#d4d0c8" font-weight="bold" text-anchor="start" letter-spacing="0.4" >Dostosuj</text>
<rect x="671" y="21" width="149" height="8" fill="url(#dith)" />
<rect x="670" y="21" width="16" height="8" fill="#d4d0c8" />
<rect x="670" y="21" width="16" height="1" fill="#ffffff"/>
<rect x="670" y="21" width="1" height="8" fill="#ffffff"/>
<rect x="670" y="28" width="16" height="1" fill="#404040"/>
<rect x="685" y="21" width="1" height="8" fill="#404040"/>
<rect x="671" y="27" width="14" height="1" fill="#808080"/>
<rect x="684" y="22" width="1" height="6" fill="#808080"/>
<rect x="676" y="24" width="2" height="2" fill="#000" />
<rect x="804" y="21" width="16" height="8" fill="#d4d0c8" />
<rect x="804" y="21" width="16" height="1" fill="#ffffff"/>
<rect x="804" y="21" width="1" height="8" fill="#ffffff"/>
<rect x="804" y="28" width="16" height="1" fill="#404040"/>
<rect x="819" y="21" width="1" height="8" fill="#404040"/>
<rect x="805" y="27" width="14" height="1" fill="#808080"/>
<rect x="818" y="22" width="1" height="6" fill="#808080"/>
<rect x="810" y="24" width="2" height="2" fill="#000" />
<rect x="686" y="21" width="16" height="8" fill="#d4d0c8" />
<rect x="686" y="21" width="16" height="1" fill="#ffffff"/>
<rect x="686" y="21" width="1" height="8" fill="#ffffff"/>
<rect x="686" y="28" width="16" height="1" fill="#404040"/>
<rect x="701" y="21" width="1" height="8" fill="#404040"/>
<rect x="687" y="27" width="14" height="1" fill="#808080"/>
<rect x="700" y="22" width="1" height="6" fill="#808080"/>
<rect x="671" y="36" width="149" height="8" fill="url(#dith)" />
<rect x="670" y="36" width="16" height="8" fill="#d4d0c8" />
<rect x="670" y="36" width="16" height="1" fill="#ffffff"/>
<rect x="670" y="36" width="1" height="8" fill="#ffffff"/>
<rect x="670" y="43" width="16" height="1" fill="#404040"/>
<rect x="685" y="36" width="1" height="8" fill="#404040"/>
<rect x="671" y="42" width="14" height="1" fill="#808080"/>
<rect x="684" y="37" width="1" height="6" fill="#808080"/>
<rect x="676" y="39" width="2" height="2" fill="#000" />
<rect x="804" y="36" width="16" height="8" fill="#d4d0c8" />
<rect x="804" y="36" width="16" height="1" fill="#ffffff"/>
<rect x="804" y="36" width="1" height="8" fill="#ffffff"/>
<rect x="804" y="43" width="16" height="1" fill="#404040"/>
<rect x="819" y="36" width="1" height="8" fill="#404040"/>
<rect x="805" y="42" width="14" height="1" fill="#808080"/>
<rect x="818" y="37" width="1" height="6" fill="#808080"/>
<rect x="810" y="39" width="2" height="2" fill="#000" />
<rect x="788" y="36" width="16" height="8" fill="#d4d0c8" />
<rect x="788" y="36" width="16" height="1" fill="#ffffff"/>
<rect x="788" y="36" width="1" height="8" fill="#ffffff"/>
<rect x="788" y="43" width="16" height="1" fill="#404040"/>
<rect x="803" y="36" width="1" height="8" fill="#404040"/>
<rect x="789" y="42" width="14" height="1" fill="#808080"/>
<rect x="802" y="37" width="1" height="6" fill="#808080"/>
<rect x="671" y="50" width="149" height="8" fill="url(#dith)" />
<rect x="670" y="50" width="16" height="8" fill="#d4d0c8" />
<rect x="670" y="50" width="16" height="1" fill="#ffffff"/>
<rect x="670" y="50" width="1" height="8" fill="#ffffff"/>
<rect x="670" y="57" width="16" height="1" fill="#404040"/>
<rect x="685" y="50" width="1" height="8" fill="#404040"/>
<rect x="671" y="56" width="14" height="1" fill="#808080"/>
<rect x="684" y="51" width="1" height="6" fill="#808080"/>
<rect x="676" y="53" width="2" height="2" fill="#000" />
<rect x="804" y="50" width="16" height="8" fill="#d4d0c8" />
<rect x="804" y="50" width="16" height="1" fill="#ffffff"/>
<rect x="804" y="50" width="1" height="8" fill="#ffffff"/>
<rect x="804" y="57" width="16" height="1" fill="#404040"/>
<rect x="819" y="50" width="1" height="8" fill="#404040"/>
<rect x="805" y="56" width="14" height="1" fill="#808080"/>
<rect x="818" y="51" width="1" height="6" fill="#808080"/>
<rect x="810" y="53" width="2" height="2" fill="#000" />
<rect x="736" y="50" width="16" height="8" fill="#d4d0c8" />
<rect x="736" y="50" width="16" height="1" fill="#ffffff"/>
<rect x="736" y="50" width="1" height="8" fill="#ffffff"/>
<rect x="736" y="57" width="16" height="1" fill="#404040"/>
<rect x="751" y="50" width="1" height="8" fill="#404040"/>
<rect x="737" y="56" width="14" height="1" fill="#808080"/>
<rect x="750" y="51" width="1" height="6" fill="#808080"/>
</svg>
</body></html>
